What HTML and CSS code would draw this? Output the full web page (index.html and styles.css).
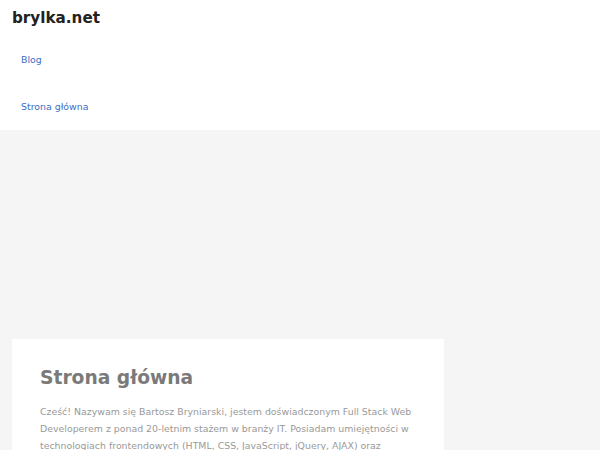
FILE: index.html
```html
<!DOCTYPE html>
<html lang="pl">
<head>
    <meta charset="UTF-8">
    <meta name="viewport" content="width=device-width, initial-scale=1.0">
    <title>brylka.net</title>
    <link rel="stylesheet" href="styles.css">
</head>
<body>
    <header class="site-header">
        <p class="site-title"><a href="#">brylka.net</a></p>
        <nav class="main-nav">
            <a class="nav-link" href="#">Blog</a>
            <a class="nav-link" href="#">Strona główna</a>
        </nav>
    </header>
    <div class="site-content">
        <div class="ad-space"></div>
        <article class="page-card">
            <h1 class="page-title">Strona główna</h1>
            <p class="page-text">Cześć! Nazywam się Bartosz Bryniarski, jestem doświadczonym Full Stack Web Developerem z ponad 20-letnim stażem w branży IT. Posiadam umiejętności w technologiach frontendowych (HTML, CSS, JavaScript, jQuery, AJAX) oraz backendowych (PHP, MySQL, Laravel, WordPress).</p>
        </article>
    </div>
</body>
</html>
```

FILE: styles.css
```css
body {
    margin: 0;
    background: #f5f5f5;
    font-family: "DejaVu Sans", sans-serif;
}
.site-header {
    background: #ffffff;
    height: 130px;
}
.site-title {
    margin: 0;
    padding: 9px 12px 0;
    font-size: 15.2px;
    font-weight: bold;
    line-height: 18px;
}
.site-title a {
    color: #222222;
    text-decoration: none;
}
.main-nav {
    display: flex;
    flex-direction: column;
    padding-top: 9px;
}
.nav-link {
    display: block;
    padding: 0 21px;
    line-height: 47px;
    font-size: 9.4px;
    color: #3d6ec3;
    text-decoration: none;
}
.site-content {
    padding: 0 12px;
}
.ad-space {
    height: 209px;
}
.page-card {
    width: 432px;
    background: #ffffff;
    padding: 25px 28px 20px;
    box-sizing: border-box;
}
.page-title {
    margin: 0 0 11px;
    font-size: 18.7px;
    line-height: 28px;
    color: #7a7a7a;
    font-weight: bold;
}
.page-text {
    margin: 0;
    font-size: 9.4px;
    line-height: 17px;
    color: #999999;
}
```
